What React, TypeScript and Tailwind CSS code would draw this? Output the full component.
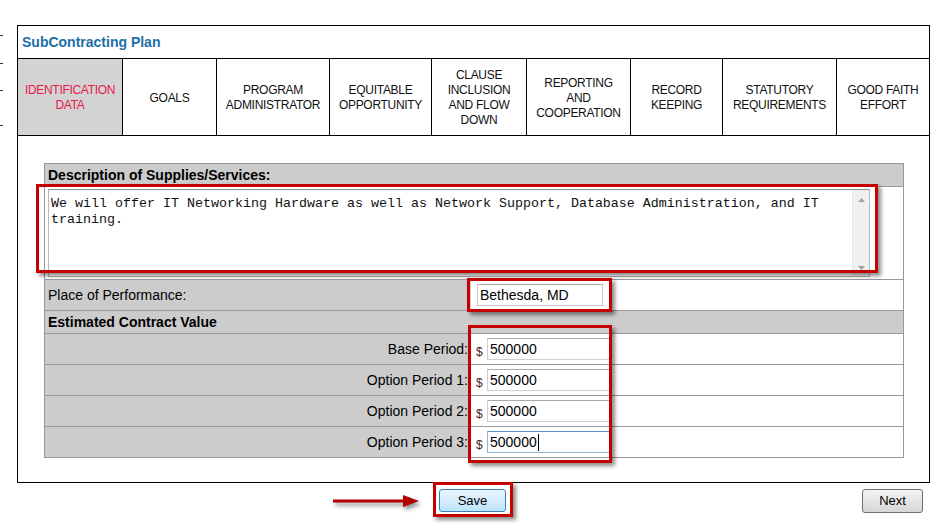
import React from "react";

const tabs: { lines: string[]; w: string; active?: boolean; last?: boolean }[] = [
  { lines: ["IDENTIFICATION", "DATA"], w: "w-[105px]", active: true },
  { lines: ["GOALS"], w: "w-[94px]" },
  { lines: ["PROGRAM", "ADMINISTRATOR"], w: "w-[113px]" },
  { lines: ["EQUITABLE", "OPPORTUNITY"], w: "w-[102px]" },
  { lines: ["CLAUSE", "INCLUSION", "AND FLOW", "DOWN"], w: "w-[95px]" },
  { lines: ["REPORTING", "AND", "COOPERATION"], w: "w-[104px]" },
  { lines: ["RECORD", "KEEPING"], w: "w-[92px]" },
  { lines: ["STATUTORY", "REQUIREMENTS"], w: "w-[114px]" },
  { lines: ["GOOD FAITH", "EFFORT"], w: "w-[92px]", last: true },
];

const periods = ["Base Period:", "Option Period 1:", "Option Period 2:", "Option Period 3:"];

function RedBox({ cls }: { cls: string }) {
  return (
    <div
      className={`absolute border-[3px] border-[#c40000] shadow-[3px_3px_4px_rgba(0,0,0,0.45)] pointer-events-none ${cls}`}
    />
  );
}

export default function App() {
  return (
    <div className="relative w-[950px] h-[525px] overflow-hidden bg-white text-black font-['Liberation_Sans',Arial,sans-serif]">
      {/* left edge fragments */}
      <div className="absolute left-0 top-[35px] w-[3px] h-px bg-[#333]" />
      <div className="absolute left-0 top-[63px] w-[3px] h-px bg-[#333]" />
      <div className="absolute left-0 top-[90px] w-[3px] h-px bg-[#333]" />
      <div className="absolute left-0 top-[125px] w-[3px] h-px bg-[#333]" />

      {/* main box */}
      <div className="ml-[17px] mt-[25px] w-[913px] h-[458px] border border-black flex flex-col">
        <div className="h-[33px] shrink-0 border-b border-black flex items-center pl-[4px] text-[14px] font-bold text-[#1b6fa7]">
          SubContracting Plan
        </div>
        <div className="h-[77px] shrink-0 border-b border-black flex">
          {tabs.map((t, i) => (
            <div
              key={i}
              className={`${t.w} h-full pt-[2px] flex flex-col items-center justify-center text-center text-[12px] leading-[15px] tracking-[-0.3px] ${
                t.last ? "" : "border-r border-black"
              } ${t.active ? "bg-[#d3d3d3] text-[#e3194b]" : "text-[#111]"}`}
            >
              {t.lines.map((l, j) => (
                <div key={j} className="whitespace-nowrap">
                  {l}
                </div>
              ))}
            </div>
          ))}
        </div>
        <div className="flex-1 pl-[26px] pt-[27px]">
          <div className="w-[860px] border border-[#999] text-[14px]">
            <div className="h-[23px] border-b border-[#999] bg-[#cccccc] flex items-center pl-[3px] font-bold">
              Description of Supplies/Services:
            </div>
            <div className="h-[93px] border-b border-[#999] bg-white pl-[3px] pt-[2px] overflow-hidden">
              <div className="w-[822px] h-[88px] flex border border-[#b9b9b9] border-t-[#8e8f8f] bg-white">
                <div className="flex-1 pl-[2px] pt-[6px] font-['Liberation_Mono','Courier_New',monospace] text-[13.33px] leading-[16px] text-[#111] whitespace-nowrap">
                  We will offer IT Networking Hardware as well as Network Support, Database Administration, and IT
                  <br />
                  training.
                </div>
                <div className="w-[17px] h-full bg-[#f0f0f0] border-l border-[#e6e6e6] flex flex-col items-center justify-between pt-[8px] pb-[6px]">
                  <svg width="7" height="4" viewBox="0 0 7 4">
                    <polygon points="0,4 3.5,0 7,4" fill="#a0a0a0" />
                  </svg>
                  <svg width="7" height="4" viewBox="0 0 7 4">
                    <polygon points="0,0 3.5,4 7,0" fill="#a0a0a0" />
                  </svg>
                </div>
              </div>
            </div>
            <div className="h-[31px] border-b border-[#999] flex">
              <div className="w-[426px] bg-[#cccccc] flex items-center pl-[3px]">Place of Performance:</div>
              <div className="flex-1 bg-white flex items-center pl-[6px]">
                <div className="w-[126px] h-[22px] border border-[#c6c6c6] border-t-[#a9a9a9] flex items-center pl-[2px]">
                  Bethesda, MD
                </div>
              </div>
            </div>
            <div className="h-[23px] border-b border-[#999] bg-[#cccccc] flex items-center pl-[3px] font-bold">
              Estimated Contract Value
            </div>
            {periods.map((p, i) => (
              <div key={i} className={`flex ${i < 3 ? "h-[31px] border-b border-[#999]" : "h-[30px]"}`}>
                <div className="w-[426px] bg-[#cccccc] flex items-center justify-end pr-[3px]">{p}</div>
                <div className="flex-1 bg-white flex items-center pl-[5px]">
                  <span className="w-[11px] text-[12px] mt-[5px] text-[#4b1c2c]">$</span>
                  <div
                    className={`w-[123px] h-[22px] border flex items-center pl-[2px] ${
                      i === 3 ? "border-[#8fb8e0] border-t-[#5a8fc4]" : "border-[#cfcfcf] border-t-[#aaaaaa]"
                    }`}
                  >
                    500000
                    {i === 3 && <span className="ml-px w-px h-[17px] bg-black" />}
                  </div>
                </div>
              </div>
            ))}
          </div>
        </div>
      </div>

      {/* bottom buttons */}
      <div className="flex items-center h-[23px] mt-[6px]">
        <div className="w-[333px] shrink-0" />
        <svg width="88" height="16" viewBox="0 0 88 16" className="shrink-0 drop-shadow-[2px_3px_2px_rgba(0,0,0,0.45)]">
          <line x1="0" y1="8" x2="72" y2="8" stroke="#b00000" strokeWidth="3" />
          <polygon points="70,2 86,8 70,14" fill="#b00000" />
        </svg>
        <button className="ml-[18px] w-[67px] h-[23px] shrink-0 rounded-[3px] border border-[#3c7fb1] bg-linear-to-b from-[#eaf6fd] to-[#bde4fb] text-[13px] text-black flex items-center justify-center">
          Save
        </button>
        <button className="ml-[356px] w-[61px] h-[24px] shrink-0 rounded-[3px] border border-[#707070] bg-linear-to-b from-[#f4f4f4] to-[#d6d6d6] text-[13px] text-black flex items-center justify-center">
          Next
        </button>
      </div>

      {/* annotation boxes */}
      <RedBox cls="left-[36px] top-[184px] w-[842px] h-[89px]" />
      <RedBox cls="left-[467px] top-[278px] w-[145px] h-[34px]" />
      <RedBox cls="left-[468px] top-[325px] w-[144px] h-[138px]" />
      <RedBox cls="left-[433px] top-[482px] w-[80px] h-[35px]" />
    </div>
  );
}
